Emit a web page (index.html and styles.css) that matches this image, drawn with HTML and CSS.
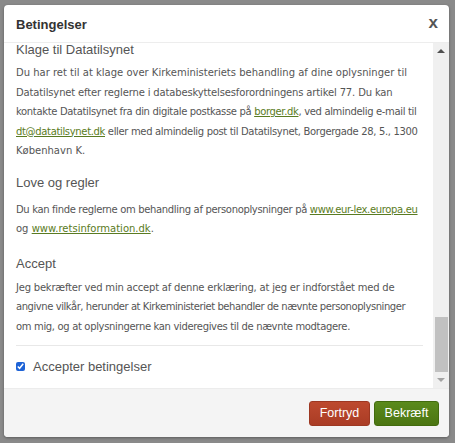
FILE: index.html
```html
<!DOCTYPE html>
<html lang="da">
<head>
<meta charset="utf-8">
<title>Betingelser</title>
<link rel="stylesheet" href="styles.css">
</head>
<body>
<div class="modal">
  <div class="modal-header">
    <h2 class="modal-title">Betingelser</h2>
    <span class="close">x</span>
  </div>
  <div class="modal-body">
    <div class="content">
      <h3 class="sec-title first">Klage til Datatilsynet</h3>
      <p class="text">
        <span class="ln">Du har ret til at klage over Kirkeministeriets behandling af dine oplysninger til</span>
        <span class="ln t1">Datatilsynet efter reglerne i databeskyttelsesforordningens artikel 77. Du kan</span>
        <span class="ln t3">kontakte Datatilsynet fra din digitale postkasse på <a href="#">borger.dk</a>, ved almindelig e-mail til</span>
        <span class="ln t3"><a href="#">dt@datatilsynet.dk</a> eller med almindelig post til Datatilsynet, Borgergade 28, 5., 1300</span>
        <span class="ln">København K.</span>
      </p>
      <h3 class="sec-title love">Love og regler</h3>
      <p class="text">
        <span class="ln t3">Du kan finde reglerne om behandling af personoplysninger på <a href="#">www.eur-lex.europa.eu</a></span>
        <span class="ln">og <a href="#">www.retsinformation.dk</a>.</span>
      </p>
      <h3 class="sec-title accept">Accept</h3>
      <p class="text">
        <span class="ln t2">Jeg bekræfter ved min accept af denne erklæring, at jeg er indforstået med de</span>
        <span class="ln t4">angivne vilkår, herunder at Kirkeministeriet behandler de nævnte personoplysninger</span>
        <span class="ln t3">om mig, og at oplysningerne kan videregives til de nævnte modtagere.</span>
      </p>
      <hr class="sep">
      <label class="check"><input type="checkbox" checked> <span>Accepter betingelser</span></label>
    </div>
    <div class="scrollbar">
      <div class="arrow up"></div>
      <div class="track"><div class="thumb"></div></div>
      <div class="arrow down"></div>
    </div>
  </div>
  <div class="modal-footer">
    <button class="btn btn-cancel">Fortryd</button>
    <button class="btn btn-ok">Bekræft</button>
  </div>
</div>
</body>
</html>
```
FILE: styles.css
```css
html, body {
  margin: 0;
  padding: 0;
}
body {
  width: 455px;
  height: 443px;
  background: #8a8a8a;
  font-family: "DejaVu Sans", Verdana, sans-serif;
  overflow: hidden;
  padding: 5px 6px 6px 4px;
  box-sizing: border-box;
}
.modal {
  width: 445px;
  height: 432px;
  background: #fff;
  border-radius: 4px;
  box-shadow: 0 1px 3px rgba(0,0,0,0.35);
  display: flex;
  flex-direction: column;
  overflow: hidden;
}
.modal-header {
  height: 38px;
  flex: none;
  display: flex;
  align-items: center;
  justify-content: space-between;
  padding: 0 11px 0 12px;
  border-bottom: 1px solid #ededed;
  box-sizing: border-box;
}
.modal-title {
  margin: 0;
  font-family: "Liberation Sans", Arial, sans-serif;
  font-size: 13px;
  font-weight: bold;
  color: #333;
  margin-top: 1px;
}
.close {
  font-family: "Liberation Sans", Arial, sans-serif;
  font-size: 17px;
  font-weight: bold;
  color: #555;
  line-height: 1;
  margin-top: -2px;
}
.modal-body {
  flex: 1;
  display: flex;
  min-height: 0;
}
.content {
  flex: 1;
  padding: 0 10px 0 12px;
  overflow: hidden;
  color: #555;
}
.sec-title {
  margin: 0;
  font-family: "Liberation Sans", Arial, sans-serif;
  font-size: 13px;
  font-weight: normal;
  color: #555;
  line-height: 20px;
}
.sec-title.first {
  margin-top: 0;
  line-height: 14px;
  padding-bottom: 2px;
}
.sec-title.love {
  margin-top: 12px;
  padding-bottom: 3px;
}
.sec-title.accept {
  margin-top: 15px;
}
.text {
  margin: 4px 0 0;
  font-size: 10px;
  line-height: 19.5px;
  color: #555;
  white-space: nowrap;
}
.ln {
  display: block;
}
.t1 { letter-spacing: -0.15px; }
.t2 { letter-spacing: -0.21px; }
.t3 { letter-spacing: -0.34px; }
.t4 { letter-spacing: -0.44px; }
.text a {
  color: #5a7b22;
  text-decoration: underline;
}
.sep {
  border: 0;
  border-top: 1px solid #e8e8e8;
  margin: 9px 0 0;
}
.check {
  display: flex;
  align-items: center;
  gap: 8px;
  font-family: "Liberation Sans", Arial, sans-serif;
  font-size: 13px;
  line-height: 15px;
  color: #555;
  margin-top: 13px;
}
.check input {
  margin: 0;
  width: 9px;
  height: 9px;
  accent-color: #1e63d6;
}
.scrollbar {
  width: 16px;
  flex: none;
  background: #f0f0f0;
  display: flex;
  flex-direction: column;
}
.arrow {
  height: 16px;
  flex: none;
  display: flex;
  align-items: center;
  justify-content: center;
}
.arrow.up::before {
  content: "";
  border-left: 4px solid transparent;
  border-right: 4px solid transparent;
  border-bottom: 4px solid #505050;
}
.arrow.down::before {
  content: "";
  border-left: 4px solid transparent;
  border-right: 4px solid transparent;
  border-top: 4px solid #a3a3a3;
}
.track {
  flex: 1;
  display: flex;
  flex-direction: column;
  justify-content: flex-end;
}
.thumb {
  height: 55px;
  margin: 0 1px 0 2px;
  background: #c1c1c1;
}
.modal-footer {
  height: 49px;
  flex: none;
  background: #f4f4f4;
  border-top: 1px solid #ececec;
  box-sizing: border-box;
  display: flex;
  justify-content: flex-end;
  align-items: center;
  gap: 4px;
  padding: 0 10px 0 0;
}
.btn {
  font-family: "Liberation Sans", Arial, sans-serif;
  font-size: 12.5px;
  color: #fff;
  height: 25px;
  border-radius: 3px;
  padding: 0;
  cursor: pointer;
}
.btn-cancel {
  background: linear-gradient(#bd4a2f, #aa3c25);
  border: 1px solid #9d3822;
  width: 61px;
}
.btn-ok {
  background: linear-gradient(#5a8a1c, #4b7512);
  border: 1px solid #426b0e;
  width: 65px;
}
```
